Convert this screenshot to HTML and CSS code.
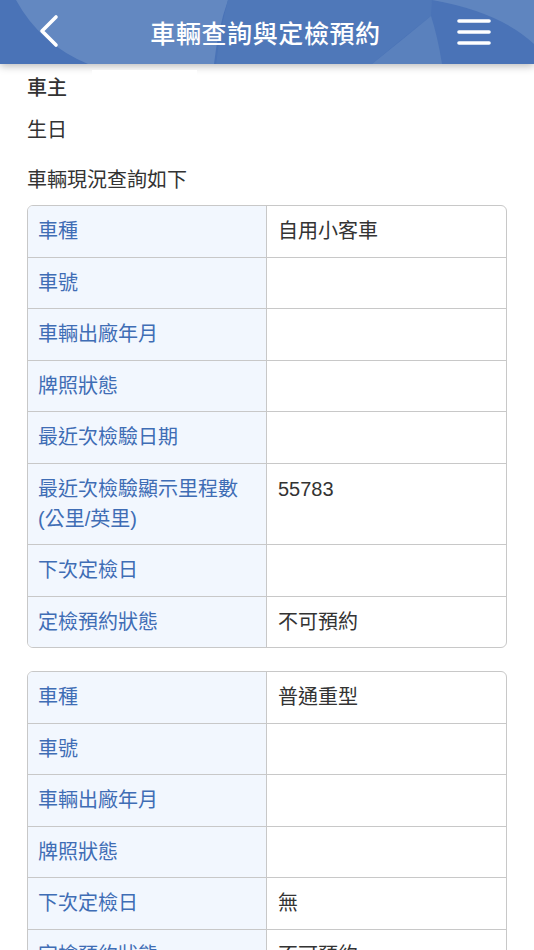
FILE: index.html
```html
<!DOCTYPE html>
<html lang="zh-Hant">
<head>
  <meta charset="UTF-8" />
  <title>車輛查詢與定檢預約</title>
  <link rel="stylesheet" href="styles.css">
</head>
<body>

<header class="app-bar">
  <svg class="app-bar-bg" viewBox="0 0 534 64" preserveAspectRatio="none">
    <rect width="534" height="64" fill="#4a73b7"/>
    <path d="M16,0 Q40,44 88,64 L214,64 Q218,28 228,0 Z" fill="#6388c1"/>
    <path d="M228,0 Q220,30 216,64 L372,64 Q400,40 431,16 L432,0 Z" fill="#4f78b9"/>
    <path d="M431,16 Q402,40 372,64 L442,64 Q438,38 431,16 Z" fill="#5a81bd"/>
    <path d="M432,0 L534,0 L534,44 Q500,12 432,0 Z" fill="#5f85bf"/>
  </svg>
  <button class="bar-btn back" aria-label="返回">
    <svg width="30" height="40" viewBox="0 0 30 40">
      <polyline points="21,5 7,19 21,33" fill="none" stroke="#fff" stroke-width="3.6" stroke-linecap="round" stroke-linejoin="round"/>
    </svg>
  </button>
  <h1 class="bar-title">車輛查詢與定檢預約</h1>
  <button class="bar-btn menu" aria-label="選單">
    <svg width="36" height="30" viewBox="0 0 36 30">
      <line x1="3" y1="4" x2="33" y2="4" stroke="#fff" stroke-width="3.6" stroke-linecap="round"/>
      <line x1="3" y1="15" x2="33" y2="15" stroke="#fff" stroke-width="3.6" stroke-linecap="round"/>
      <line x1="3" y1="26" x2="33" y2="26" stroke="#fff" stroke-width="3.6" stroke-linecap="round"/>
    </svg>
  </button>
</header>

<main class="content">
  <div class="owner-mask"></div>
  <div class="info-line owner">車主</div>
  <div class="info-line birth">生日</div>
  <p class="intro">車輛現況查詢如下</p>

  <table class="car-table">
    <tr><th>車種</th><td>自用小客車</td></tr>
    <tr><th>車號</th><td></td></tr>
    <tr><th>車輛出廠年月</th><td></td></tr>
    <tr><th>牌照狀態</th><td></td></tr>
    <tr><th>最近次檢驗日期</th><td></td></tr>
    <tr><th>最近次檢驗顯示里程數(公里/英里)</th><td>55783</td></tr>
    <tr><th>下次定檢日</th><td></td></tr>
    <tr><th>定檢預約狀態</th><td>不可預約</td></tr>
  </table>

  <table class="car-table">
    <tr><th>車種</th><td>普通重型</td></tr>
    <tr><th>車號</th><td></td></tr>
    <tr><th>車輛出廠年月</th><td></td></tr>
    <tr><th>牌照狀態</th><td></td></tr>
    <tr><th>下次定檢日</th><td>無</td></tr>
    <tr><th>定檢預約狀態</th><td>不可預約</td></tr>
  </table>
</main>

</body>
</html>
```

FILE: styles.css
```css
* { box-sizing: border-box; }
body, html {
  margin: 0;
  padding: 0;
  background: #fff;
  font-family: "Liberation Sans", "Noto Sans CJK TC", sans-serif;
  color: #333;
  overflow: hidden;
}
.app-bar {
  position: relative;
  z-index: 2;
  height: 64px;
  display: flex;
  align-items: center;
  box-shadow: 0 2px 8px rgba(0, 0, 0, 0.28);
}
.app-bar-bg {
  position: absolute;
  top: 0; left: 0;
  width: 100%;
  height: 100%;
  z-index: -1;
}
.bar-btn {
  background: none;
  border: none;
  padding: 0;
  display: flex;
  align-items: center;
  cursor: pointer;
}
.bar-btn.back { margin-left: 35px; width: 30px; }
.bar-btn.menu { margin-right: 42px; }
.bar-title {
  flex: 1;
  margin: 0;
  color: #fff;
  font-size: 25px;
  font-weight: 500;
  text-align: center;
  letter-spacing: 0.6px;
  padding-left: 10px;
}
.content {
  position: relative;
  padding: 9px 27px 0;
}
.owner-mask {
  position: absolute;
  top: 6px;
  left: 92px;
  width: 105px;
  height: 20px;
  background: #fff;
  z-index: 3;
}
.info-line {
  font-size: 20px;
  line-height: 30px;
  color: #333;
}
.info-line.owner { font-weight: 500; }
.info-line.birth { margin-top: 12px; }
.intro {
  margin: 20px 0 10px;
  font-size: 20px;
  line-height: 30px;
}
.car-table {
  width: 100%;
  border-collapse: separate;
  border-spacing: 0;
  border: 1px solid #c8c8c8;
  border-radius: 6px;
  overflow: hidden;
  margin-bottom: 23px;
  table-layout: fixed;
}
.car-table th, .car-table td {
  font-size: 20px;
  line-height: 30px;
  padding: 10.25px 10px;
  text-align: left;
  vertical-align: top;
  border-bottom: 1px solid #c8c8c8;
}
.car-table tr:last-child th, .car-table tr:last-child td { border-bottom: none; }
.car-table th {
  width: 50%;
  background: #f2f7fe;
  color: #3f6db5;
  font-weight: normal;
  border-right: 1px solid #c8c8c8;
}
.car-table td {
  color: #333;
  padding-left: 11px;
}
```
